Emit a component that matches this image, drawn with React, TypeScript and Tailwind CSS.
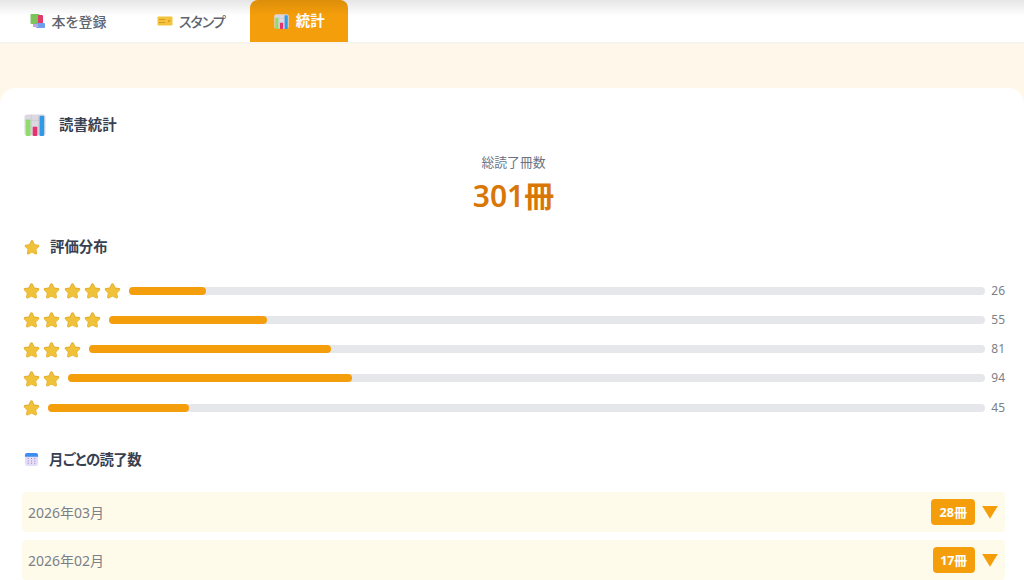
import type { ReactNode } from "react";

const total = 301;

const ratings = [
  { stars: 5, count: 26 },
  { stars: 4, count: 55 },
  { stars: 3, count: 81 },
  { stars: 2, count: 94 },
  { stars: 1, count: 45 },
];

const months = [
  { label: "2026年03月", count: 28 },
  { label: "2026年02月", count: 17 },
];

function ChartIcon({ className }: { className?: string }) {
  return (
    <svg viewBox="0 0 24 24" className={className}>
      <rect x="0.5" y="0.5" width="23" height="23" rx="3" fill="#dcd8e2" />
      <path d="M8 1v22M16 1v22M1 7h22M1 14h22" stroke="#c4c0cc" strokeWidth="0.6" />
      <rect x="2" y="6" width="5" height="18" rx="1" fill="#8fdc6a" />
      <rect x="9.5" y="14" width="5" height="10" rx="1" fill="#e8326f" />
      <rect x="17" y="2" width="5" height="22" rx="1" fill="#2f9be8" />
    </svg>
  );
}

function BooksIcon({ className }: { className?: string }) {
  return (
    <svg viewBox="0 0 16 16" className={className}>
      <rect x="0.5" y="1" width="9" height="10" rx="1" fill="#7cc35a" />
      <rect x="8" y="2" width="5" height="10" rx="1" fill="#e23a6d" />
      <rect x="6" y="10" width="9" height="5" rx="1" fill="#6f9fe8" />
      <rect x="3" y="11" width="5" height="3" fill="#b9a8d8" />
    </svg>
  );
}

function TicketIcon({ className }: { className?: string }) {
  return (
    <svg viewBox="0 0 16 12" className={className}>
      <rect x="0.5" y="1.5" width="15" height="9" rx="1" fill="#f3c33c" />
      <path d="M2 4.5h6M2 7.5h6" stroke="#d79a22" strokeWidth="1" />
      <circle cx="12" cy="6" r="1" fill="#e08a2a" />
    </svg>
  );
}

function CalendarIcon({ className }: { className?: string }) {
  return (
    <svg viewBox="0 0 16 16" className={className}>
      <rect x="1" y="1" width="14" height="14" rx="2.5" fill="#e6dcf5" />
      <path d="M1 5V3.5A2.5 2.5 0 0 1 3.5 1h9A2.5 2.5 0 0 1 15 3.5V5z" fill="#3b8df2" />
      <path
        d="M4 7h1M7.5 7h1M11 7h1M4 9.5h1M7.5 9.5h1M11 9.5h1M4 12h1M7.5 12h1M11 12h1"
        stroke="#8f8ac0"
        strokeWidth="1.1"
      />
    </svg>
  );
}

function StarIcon({ className }: { className?: string }) {
  return (
    <svg viewBox="0 0 24 24" className={className}>
      <path
        d="M12 1.6c.8 0 1.4.5 1.8 1.3l2.3 4.9 5.2.7c1.7.2 2.3 2.2 1.1 3.3l-3.8 3.7 1 5.4c.3 1.7-1.4 2.9-2.9 2.1L12 20.4l-4.7 2.6c-1.5.8-3.2-.4-2.9-2.1l1-5.4-3.8-3.7c-1.2-1.1-.6-3.1 1.1-3.3l5.2-.7 2.3-4.9c.4-.8 1-1.3 1.8-1.3z"
        fill="#e3ad2f"
      />
      <path
        d="M12 3.2c.5 0 .9.3 1.2.9l2.4 5 5.4.8c1.1.1 1.5 1.4.7 2.1l-3.9 3.8 1 5.2c.2 1-.9 1.8-1.8 1.3L12 19.7l-4.7 2.5c-.9.5-2-.3-1.8-1.3l1-5.2-3.9-3.8c-.8-.7-.4-2 .7-2.1l5.4-.8 2.4-5c.3-.6.7-.9 1.2-.9z"
        fill="#efc23a"
      />
    </svg>
  );
}

function Tab({ icon, label, active, className }: { icon: ReactNode; label: string; active?: boolean; className?: string }) {
  return (
    <div
      className={
        active
          ? "flex items-center justify-center gap-[7px] w-[98px] rounded-t-lg bg-[#f59e0b] text-white font-semibold"
          : "flex items-center justify-center gap-[5.5px] px-[25.5px] text-[14px] text-[#5f6570] font-medium"
      }
    >
      {icon}
      <span className={className}>{label}</span>
    </div>
  );
}

function SectionTitle({ icon, children, className }: { icon: ReactNode; children: ReactNode; className?: string }) {
  return (
    <div className="flex items-center gap-[10px] text-[14.4px] leading-[20px] font-semibold text-[#374151]">
      {icon}
      <h3 className={className}>{children}</h3>
    </div>
  );
}

export default function App() {
  return (
    <div
      className="h-[580px] w-[1024px] overflow-hidden bg-[#fff8ea] text-[14.4px] [font-feature-settings:'palt']"
      style={{ fontFamily: '"Noto Sans", "Noto Sans CJK JP", sans-serif' }}
    >
      {/* Tabs */}
      <div className="relative flex h-[44px] border-b-2 border-[#f7f4ee] bg-white pl-[4.5px]">
        <Tab icon={<BooksIcon className="w-[16px] h-[16px]" />} label="本を登録" />
        <Tab icon={<TicketIcon className="w-[16px] h-[12px]" />} label="スタンプ" className="tracking-[-1px]" />
        <Tab active icon={<ChartIcon className="w-[15px] h-[15px]" />} label="統計" />
        <div className="pointer-events-none absolute inset-x-0 top-0 h-[16px] bg-gradient-to-b from-black/10 to-transparent" />
      </div>

      {/* Stats card */}
      <div className="mt-[44px] h-[492px] rounded-t-2xl bg-white pl-[22px] pr-[19px] pt-[26px]">
        <div className="pl-[2px]">
          <SectionTitle icon={<ChartIcon className="w-[22px] h-[22px] mr-[3px]" />}>読書統計</SectionTitle>
        </div>

        <div className="mt-[17px] flex flex-col items-center">
          <p className="text-[12.8px] leading-[18px] text-[#6b7280]">総読了冊数</p>
          <p className="mt-[6px] text-[30px] leading-[38px] font-semibold text-[#d97706]">{total}冊</p>
        </div>

        <div className="mt-[22px] pl-[2px]">
          <SectionTitle icon={<StarIcon className="w-[16px] h-[16px]" />}>評価分布</SectionTitle>
        </div>

        <div className="mt-[23.5px] flex flex-col gap-[9.3px] pl-[1px]">
          {ratings.map((r) => (
            <div key={r.stars} className="flex h-[20px] items-center">
              <div className="mr-[8px] flex gap-[3.3px]">
                {Array.from({ length: r.stars }).map((_, i) => (
                  <StarIcon key={i} className="w-[17px] h-[17px]" />
                ))}
              </div>
              <div className="h-[8px] flex-1 rounded-full bg-[#e5e7eb]">
                <div
                  className="h-full rounded-full bg-[#f59e0b]"
                  style={{ width: `${Math.round((r.count / total) * 100)}%` }}
                />
              </div>
              <span className="w-[20px] text-right text-[12px] text-[#7b8088]">{r.count}</span>
            </div>
          ))}
        </div>

        <div className="mt-[32px] pl-[2px]">
          <SectionTitle
            icon={<CalendarIcon className="w-[15px] h-[15px]" />}
            className="tracking-[-0.6px]"
          >
            月ごとの読了数
          </SectionTitle>
        </div>

        <div className="mt-[22.5px] flex flex-col gap-[8px]">
          {months.map((m) => (
            <div key={m.label} className="flex h-[40px] items-center rounded bg-[#fffbeb] pl-[6px] pr-[7px]">
              <span className="flex-1 text-[14px] text-[#7b8088]">{m.label}</span>
              <span className="rounded bg-[#f59e0b] px-[8px] py-[3px] text-[12.8px] font-bold leading-[20px] text-white proportional-nums">
                {m.count}冊
              </span>
              <span className="ml-[7px] w-[16px] h-[13px] bg-[#f59e0b] [clip-path:polygon(0_0,100%_0,50%_100%)]" />
            </div>
          ))}
        </div>
      </div>
    </div>
  );
}
